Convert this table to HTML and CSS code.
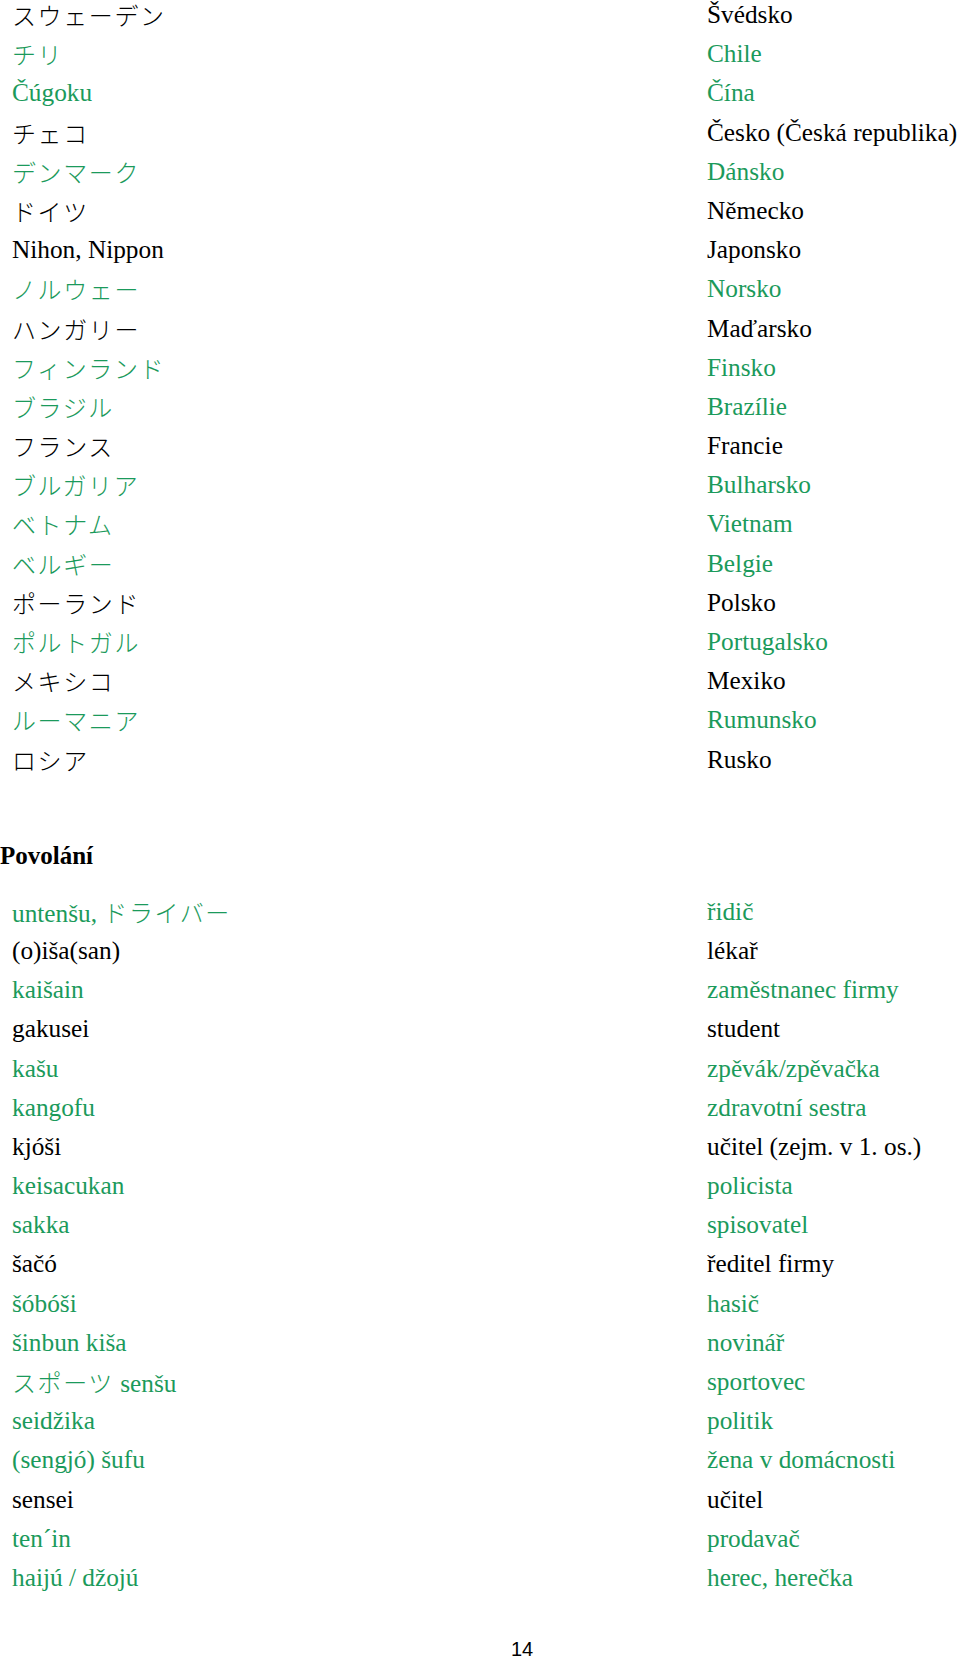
FILE: index.html
```html
<!DOCTYPE html>
<html lang="cs">
  <head>
    <meta charset="UTF-8" />
    <meta name="viewport" content="width=device-width, initial-scale=1.0" />
    <title>Slovíčka 14</title>
    <link rel="stylesheet" href="styles.css">
  </head>
  <body>
    <main class="page">
      <section class="list countries">
        <div class="term"><span class="ja">スウェーデン</span></div>
        <div class="meaning">Švédsko</div>
        <div class="term green"><span class="ja">チリ</span></div>
        <div class="meaning green">Chile</div>
        <div class="term green">Čúgoku</div>
        <div class="meaning green">Čína</div>
        <div class="term"><span class="ja">チェコ</span></div>
        <div class="meaning">Česko (Česká republika)</div>
        <div class="term green"><span class="ja">デンマーク</span></div>
        <div class="meaning green">Dánsko</div>
        <div class="term"><span class="ja">ドイツ</span></div>
        <div class="meaning">Německo</div>
        <div class="term">Nihon, Nippon</div>
        <div class="meaning">Japonsko</div>
        <div class="term green"><span class="ja">ノルウェー</span></div>
        <div class="meaning green">Norsko</div>
        <div class="term"><span class="ja">ハンガリー</span></div>
        <div class="meaning">Maďarsko</div>
        <div class="term green"><span class="ja">フィンランド</span></div>
        <div class="meaning green">Finsko</div>
        <div class="term green"><span class="ja">ブラジル</span></div>
        <div class="meaning green">Brazílie</div>
        <div class="term"><span class="ja">フランス</span></div>
        <div class="meaning">Francie</div>
        <div class="term green"><span class="ja">ブルガリア</span></div>
        <div class="meaning green">Bulharsko</div>
        <div class="term green"><span class="ja">ベトナム</span></div>
        <div class="meaning green">Vietnam</div>
        <div class="term green"><span class="ja">ベルギー</span></div>
        <div class="meaning green">Belgie</div>
        <div class="term"><span class="ja">ポーランド</span></div>
        <div class="meaning">Polsko</div>
        <div class="term green"><span class="ja">ポルトガル</span></div>
        <div class="meaning green">Portugalsko</div>
        <div class="term"><span class="ja">メキシコ</span></div>
        <div class="meaning">Mexiko</div>
        <div class="term green"><span class="ja">ルーマニア</span></div>
        <div class="meaning green">Rumunsko</div>
        <div class="term"><span class="ja">ロシア</span></div>
        <div class="meaning">Rusko</div>
      </section>

      <h2 class="heading">Povolání</h2>

      <section class="list jobs">
        <div class="term green">untenšu, <span class="ja">ドライバー</span></div>
        <div class="meaning green">řidič</div>
        <div class="term">(o)iša(san)</div>
        <div class="meaning">lékař</div>
        <div class="term green">kaišain</div>
        <div class="meaning green">zaměstnanec firmy</div>
        <div class="term">gakusei</div>
        <div class="meaning">student</div>
        <div class="term green">kašu</div>
        <div class="meaning green">zpěvák/zpěvačka</div>
        <div class="term green">kangofu</div>
        <div class="meaning green">zdravotní sestra</div>
        <div class="term">kjóši</div>
        <div class="meaning">učitel (zejm. v 1. os.)</div>
        <div class="term green">keisacukan</div>
        <div class="meaning green">policista</div>
        <div class="term green">sakka</div>
        <div class="meaning green">spisovatel</div>
        <div class="term">šačó</div>
        <div class="meaning">ředitel firmy</div>
        <div class="term green">šóbóši</div>
        <div class="meaning green">hasič</div>
        <div class="term green">šinbun kiša</div>
        <div class="meaning green">novinář</div>
        <div class="term green"><span class="ja">スポーツ</span> senšu</div>
        <div class="meaning green">sportovec</div>
        <div class="term green">seidžika</div>
        <div class="meaning green">politik</div>
        <div class="term green">(sengjó) šufu</div>
        <div class="meaning green">žena v domácnosti</div>
        <div class="term">sensei</div>
        <div class="meaning">učitel</div>
        <div class="term green">ten´in</div>
        <div class="meaning green">prodavač</div>
        <div class="term green">haijú / džojú</div>
        <div class="meaning green">herec, herečka</div>
      </section>

      <footer class="page-number">14</footer>
    </main>
  </body>
</html>
```

FILE: styles.css
```css
body {
  margin: 0;
  background-color: #fff;
  color: #000;
  font-family: "Liberation Serif", "Noto Sans CJK JP", serif;
}
.page {
  width: 960px;
  height: 1659px;
  overflow: hidden;
}
.list {
  display: grid;
  grid-template-columns: 695px 1fr;
  grid-auto-rows: 39.2px;
  padding-left: 12px;
  font-size: 25.3px;
  line-height: 27px;
  white-space: nowrap;
}
.countries {
  margin-top: 1px;
}
.green {
  color: #1b9a5b;
}
.ja {
  font-family: "Noto Sans CJK JP", sans-serif;
  font-weight: 300;
  font-size: 24px;
  letter-spacing: 1.6px;
}
.heading {
  margin: 56px 0 0;
  font-size: 25px;
  line-height: 30px;
  font-weight: bold;
}
.jobs {
  margin-top: 27px;
}
.page-number {
  margin-top: 38px;
  padding-left: 84px;
  text-align: center;
  font-family: "Liberation Sans", sans-serif;
  font-size: 20px;
  line-height: 16px;
}
```
